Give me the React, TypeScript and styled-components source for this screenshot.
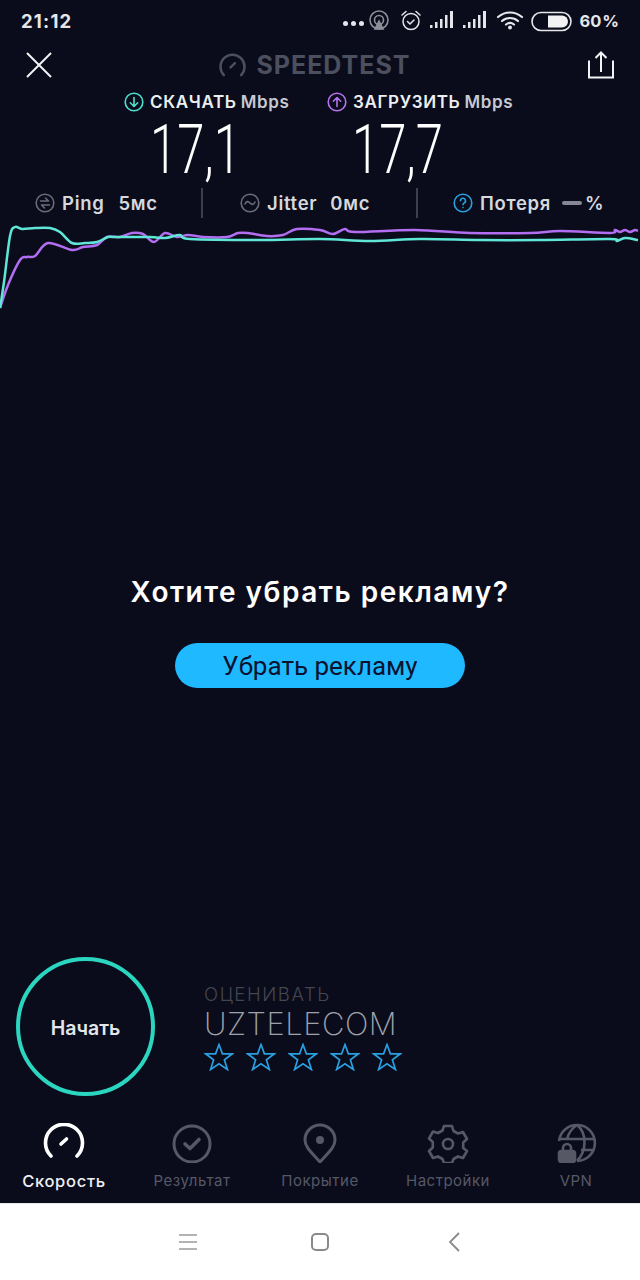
import React from 'react';
import styled, { createGlobalStyle } from 'styled-components';

const GlobalStyle = createGlobalStyle`
  html, body { margin: 0; padding: 0; background: #0a0c1b; }
  * { box-sizing: border-box; }
`;

const Screen = styled.div`
  width: 640px;
  height: 1280px;
  display: flex;
  flex-direction: column;
  background: #0a0c1b;
  font-family: Inter, "Noto Sans", sans-serif;
  overflow: hidden;
`;

const StatusBar = styled.div`
  height: 41px;
  padding: 0 21px 0 21px;
  display: flex;
  align-items: center;
  color: #e6e6ea;
`;

const Clock = styled.span`
  font-size: 18.5px;
  font-weight: 700;
  letter-spacing: 1.2px;
  margin-right: auto;
`;

const Battery = styled.span`
  font-size: 16.5px;
  font-weight: 700;
  margin-left: 7px;
  word-spacing: -3px;
`;

const StatusIcons = styled.svg`
  display: block;
`;

const Header = styled.div`
  height: 48px;
  padding: 0 26px;
  display: flex;
  align-items: center;
  justify-content: space-between;
`;

const Logo = styled.div`
  display: flex;
  align-items: center;
  gap: 10px;
  color: #4c4f5e;
  font-size: 25px;
  font-weight: 700;
  letter-spacing: 1px;
  margin-right: 10px;
`;

const SpeedRow = styled.div`
  display: flex;
  height: 26px;
  align-items: center;
  padding-left: 124px;
`;

const SpeedLabel = styled.div<{ $width: number }>`
  width: ${(p) => p.$width}px;
  display: flex;
  align-items: center;
  gap: 6px;
  font-size: 17px;
  font-weight: 600;
  letter-spacing: 0.65px;
  color: #eceef2;
  white-space: nowrap;
`;

const Unit = styled.span`
  color: #c6c9d2;
  margin-left: -2px;
`;

const Values = styled.div`
  display: flex;
  height: 66px;
  padding: 3px 0 0 150px;
`;

const Value = styled.div<{ $width: number }>`
  width: ${(p) => p.$width}px;
  font-family: Roboto, sans-serif;
  font-weight: 300;
  font-size: 69px;
  line-height: 63px;
  color: #fff;
  transform: scaleX(0.71);
  transform-origin: left center;
  white-space: nowrap;
`;

const Stats = styled.div`
  display: grid;
  grid-template-columns: 201px 215px 224px;
  height: 30px;
  margin-top: 7px;
`;

const Stat = styled.div<{ $pad: number; $divider?: boolean }>`
  display: flex;
  align-items: center;
  padding-left: ${(p) => p.$pad}px;
  font-size: 18.5px;
  font-weight: 600;
  letter-spacing: 0.7px;
  color: #d6d8de;
  white-space: nowrap;
  border-left: ${(p) => (p.$divider ? '2px solid #3c3f4c' : 'none')};
`;

const StatName = styled.span<{ $gap: number }>`
  margin: 0 ${(p) => p.$gap}px 0 7px;
`;

const Dash = styled.span`
  width: 20px;
  height: 4px;
  border-radius: 2px;
  background: #858894;
  margin: 0 3px 0 8px;
`;

const Chart = styled.svg`
  display: block;
  margin-top: 4px;
`;

const Promo = styled.div`
  flex: 1;
  display: flex;
  flex-direction: column;
  align-items: center;
  padding-top: 260px;
`;

const PromoTitle = styled.div`
  font-size: 28px;
  line-height: 36px;
  font-weight: 600;
  letter-spacing: 1.5px;
  color: #fff;
`;

const PromoButton = styled.button`
  width: 290px;
  height: 45px;
  margin-top: 33px;
  border: none;
  border-radius: 23px;
  background: #1fb9ff;
  color: #0a1230;
  font-family: Roboto, sans-serif;
  font-size: 26px;
  padding: 0;
`;

const Bottom = styled.div`
  display: flex;
  align-items: center;
  padding-left: 16px;
  height: 139px;
  margin-bottom: 24px;
`;

const StartCircle = styled.div`
  width: 139px;
  height: 139px;
  border: 4px solid #2bd6c0;
  border-radius: 50%;
  display: flex;
  align-items: center;
  justify-content: center;
  color: #e4e5ea;
  font-size: 19.5px;
  font-weight: 600;
  padding-top: 3px;
`;

const Rate = styled.div`
  margin-left: 49px;
  display: flex;
  flex-direction: column;
`;

const RateCaption = styled.div`
  font-size: 18.5px;
  line-height: 22px;
  font-weight: 300;
  letter-spacing: 1.6px;
  margin-top: 1px;
  color: #44464f;
`;

const Isp = styled.div`
  font-size: 31px;
  line-height: 36px;
  font-weight: 200;
  color: #a0a2ab;
  letter-spacing: 0.5px;
  margin-top: 1px;
`;

const Stars = styled.div`
  display: flex;
  gap: 12px;
  margin-top: 1px;
`;

const Tabs = styled.div`
  display: grid;
  grid-template-columns: repeat(5, 1fr);
  padding-top: 3px;
  height: 83px;
`;

const Tab = styled.div<{ $active?: boolean }>`
  display: flex;
  flex-direction: column;
  align-items: center;
  gap: 8px;
  font-size: ${(p) => (p.$active ? 16.5 : 15)}px;
  line-height: 20px;
  font-weight: ${(p) => (p.$active ? 500 : 400)};
  letter-spacing: ${(p) => (p.$active ? 0.7 : 0.5)}px;
  color: ${(p) => (p.$active ? '#eef0f4' : '#565866')};
`;

const NavBar = styled.div`
  flex: none;
  height: 77px;
  background: #fff;
  border-top: 1px solid #e8e8ec;
  display: flex;
  align-items: center;
  gap: 114px;
  padding: 0 0 1px 179px;
`;

const BackIcon = styled.svg`
  margin-left: 5px;
`;

const pointsToPath = (pts: number[][]) => {
  let d = `M${pts[0][0]} ${pts[0][1]}`;
  for (let i = 0; i < pts.length - 1; i++) {
    const p0 = pts[Math.max(i - 1, 0)];
    const p1 = pts[i];
    const p2 = pts[i + 1];
    const p3 = pts[Math.min(i + 2, pts.length - 1)];
    const c1x = p1[0] + (p2[0] - p0[0]) / 6;
    const c1y = p1[1] + (p2[1] - p0[1]) / 6;
    const c2x = p2[0] - (p3[0] - p1[0]) / 6;
    const c2y = p2[1] - (p3[1] - p1[1]) / 6;
    d += ` C${c1x.toFixed(1)} ${c1y.toFixed(1)} ${c2x.toFixed(1)} ${c2y.toFixed(1)} ${p2[0]} ${p2[1]}`;
  }
  return d;
};

// y values are relative to the top of the chart (page y 222)
const downloadLine = [
  [0, 86], [4, 60], [10, 14], [15, 5], [22, 7], [35, 6], [50, 6], [60, 10], [72, 21], [85, 21], [97, 20],
  [108, 15], [115, 15], [150, 15], [165, 16], [180, 13], [190, 17], [260, 18], [320, 17], [370, 19], [420, 17],
  [480, 18], [540, 18], [610, 17], [617, 19], [625, 16], [638, 18],
];
const uploadLine = [
  [0, 86], [8, 63], [20, 38], [27, 35], [35, 34], [48, 21], [72, 28], [83, 25], [97, 23], [107, 15], [120, 15],
  [132, 11], [143, 12], [154, 20], [165, 11], [177, 15], [188, 13], [203, 15], [227, 15], [238, 11], [248, 11],
  [267, 14], [283, 13], [297, 7], [320, 8], [333, 12], [345, 7], [355, 10], [415, 8], [470, 11], [530, 11],
  [560, 9], [610, 11], [615, 8], [620, 10], [625, 8], [630, 10], [635, 8], [638, 9],
];

const Star = () => (
  <svg width="30" height="28" viewBox="0 0 30 28" fill="none" stroke="#2a9fe0" strokeWidth="1.7" strokeLinejoin="miter">
    <path d="M15 1.5l3.4 9.3h10l-8 6 3 9.7-8.400-5.800-8.400 5.800 3-9.700-8-6h10z" />
  </svg>
);

const CircleIcon = ({ color, children }: { color: string; children: React.ReactNode }) => (
  <svg width="20" height="20" viewBox="0 0 20 20" fill="none" stroke={color} strokeWidth="1.6" strokeLinecap="round" strokeLinejoin="round">
    <circle cx="10" cy="10" r="8.800" />
    {children}
  </svg>
);

const tabColor = '#565866';

const StatusGlyphs = () => (
  <StatusIcons width="229" height="24" viewBox="0 0 229 24" fill="none">
    <g fill="#e6e6ea">
      <circle cx="2.500" cy="14.500" r="2.500" />
      <circle cx="10.500" cy="14.500" r="2.500" />
      <circle cx="18.500" cy="14.500" r="2.500" />
    </g>
    <g stroke="#8d8f98" strokeWidth="1.600">
      <circle cx="36" cy="11" r="9" />
      <circle cx="36" cy="11" r="4.500" />
      <path d="M36 12l-4 8h8z" fill="#8d8f98" />
    </g>
    <g stroke="#e6e6ea" strokeWidth="1.500" strokeLinecap="round" strokeLinejoin="round">
      <circle cx="68" cy="12.500" r="8" />
      <path d="M64.500 12.500l2.500 2.500 4-4M59 6l4-3.500M77 6l-4-3.500" />
    </g>
    <g fill="#e6e6ea">
      <rect x="87" y="16" width="2.500" height="3" />
      <rect x="92" y="13" width="2.500" height="6" />
      <rect x="97" y="10" width="2.500" height="9" />
      <rect x="102" y="6" width="2.500" height="13" />
      <rect x="107" y="2" width="3" height="17" />
      <rect x="120" y="16" width="2.500" height="3" />
      <rect x="125" y="13" width="2.500" height="6" />
      <rect x="130" y="10" width="2.500" height="9" />
      <rect x="135" y="6" width="2.500" height="13" />
      <rect x="140" y="2" width="3" height="17" />
    </g>
    <g stroke="#e6e6ea" strokeWidth="2.200" strokeLinecap="round" fill="none">
      <path d="M155 8c7-6 17-6 24 0M159 12c4.500-4 11.500-4 16 0M163 15.500c2.500-2 5.500-2 8 0" />
    </g>
    <circle cx="167" cy="18.500" r="2" fill="#e6e6ea" />
    <rect x="189" y="3.500" width="39" height="18" rx="9" stroke="#e6e6ea" strokeWidth="1.600" />
    <path d="M205 6.500h14a6 6 0 0 1 0 12h-14z" fill="#f2f2f4" />
  </StatusIcons>
);

export default function App() {
  return (
    <Screen>
      <GlobalStyle />
      <StatusBar>
        <Clock>21:12</Clock>
        <StatusGlyphs />
        <Battery>60 %</Battery>
      </StatusBar>

      <Header>
        <svg width="26" height="26" viewBox="0 0 26 26" stroke="#f2f3f5" strokeWidth="2" fill="none">
          <path d="M1 1l24 24M25 1L1 25" />
        </svg>
        <Logo>
          <svg width="27" height="25" viewBox="0 0 28 26" fill="none" stroke="#4c4f5e" strokeWidth="2.600" strokeLinecap="round">
            <path d="M5 23A12.500 12.500 0 1 1 23 23" />
            <path d="M12 15l4.500-4.500" />
          </svg>
          SPEEDTEST
        </Logo>
        <svg width="26" height="28" viewBox="0 0 26 28" fill="none" stroke="#f2f3f5" strokeWidth="2">
          <path d="M1 9.500V26.500H25V9.500M13 21V2M7.500 7L13 1.500 18.500 7" />
        </svg>
      </Header>

      <SpeedRow>
        <SpeedLabel $width={203}>
          <CircleIcon color="#4fe0cf">
            <path d="M10 5.500v9M6.300 10.800L10 14.500l3.700-3.700" />
          </CircleIcon>
          СКАЧАТЬ <Unit>Mbps</Unit>
        </SpeedLabel>
        <SpeedLabel $width={200}>
          <CircleIcon color="#b672ee">
            <path d="M10 14.500v-9M6.300 9.200L10 5.500l3.700 3.700" />
          </CircleIcon>
          ЗАГРУЗИТЬ <Unit>Mbps</Unit>
        </SpeedLabel>
      </SpeedRow>

      <Values>
        <Value $width={202}>17,1</Value>
        <Value $width={150}>17,7</Value>
      </Values>

      <Stats>
        <Stat $pad={35}>
          <CircleIcon color="#6a6c78">
            <path d="M5.500 8h8l-3-3M14.500 12h-8l3 3" />
          </CircleIcon>
          <StatName $gap={14}>Ping</StatName>
          5мс
        </Stat>
        <Stat $pad={37} $divider>
          <CircleIcon color="#6a6c78">
            <path d="M5 11c1.500-3 3-3 5-1s3.500 2 5-1" />
          </CircleIcon>
          <StatName $gap={13}>Jitter</StatName>
          0мс
        </Stat>
        <Stat $pad={35} $divider>
          <CircleIcon color="#2a9fe0">
            <path d="M7.500 7.800a2.500 2.500 0 1 1 3.500 2.300c-.7.400-1 .8-1 1.700M10 14.500v.1" />
          </CircleIcon>
          <StatName $gap={3}>Потеря</StatName>
          <Dash />
          %
        </Stat>
      </Stats>

      <Chart width="640" height="92" viewBox="0 0 640 92" fill="none" strokeWidth="2.500" strokeLinejoin="round">
        <path d={pointsToPath(uploadLine)} stroke="#b26df0" />
        <path d={pointsToPath(downloadLine)} stroke="#5fe6d6" />
      </Chart>

      <Promo>
        <PromoTitle>Хотите убрать рекламу?</PromoTitle>
        <PromoButton>Убрать рекламу</PromoButton>
      </Promo>

      <Bottom>
        <StartCircle>Начать</StartCircle>
        <Rate>
          <RateCaption>ОЦЕНИВАТЬ</RateCaption>
          <Isp>UZTELECOM</Isp>
          <Stars>
            {[0, 1, 2, 3, 4].map((i) => (
              <Star key={i} />
            ))}
          </Stars>
        </Rate>
      </Bottom>

      <Tabs>
        <Tab $active>
          <svg width="42" height="40" viewBox="0 0 42 40" fill="none" stroke="#fff" strokeWidth="3.600" strokeLinecap="round">
            <path d="M8 33A18.500 18.500 0 1 1 34 33" />
            <path d="M18 21l5.500-5" />
          </svg>
          Скорость
        </Tab>
        <Tab>
          <svg width="42" height="40" viewBox="0 0 42 40" fill="none" stroke={tabColor} strokeWidth="3" strokeLinecap="round" strokeLinejoin="round">
            <circle cx="21" cy="21" r="18" />
            <path d="M14 21l5 4.500 9-9" strokeWidth="3.600" />
          </svg>
          Результат
        </Tab>
        <Tab>
          <svg width="42" height="40" viewBox="0 0 42 40" fill="none" stroke={tabColor} strokeWidth="3" strokeLinejoin="round">
            <path d="M21 39C12 29 6 24 6 17a15 15 0 0 1 30 0c0 7-6 12-15 22z" />
            <circle cx="21" cy="17" r="2.500" fill={tabColor} />
          </svg>
          Покрытие
        </Tab>
        <Tab>
          <svg width="42" height="40" viewBox="0 0 42 40" fill="none" stroke={tabColor} strokeWidth="2.600" strokeLinejoin="round">
            <path d="M17 3h8l1.500 5 4.500 2.500 5-1.500 4 7-3.800 3.500v5.500L40 28l-4 7-5-1.500-4.500 2.500-1.500 4h-8l-1.500-4-4.500-2.500-5 1.500-4-7 3.800-3.500V19L2 15.500l4-7 5 1.500L15.500 7.500z" />
            <circle cx="21" cy="21" r="5" />
          </svg>
          Настройки
        </Tab>
        <Tab>
          <svg width="42" height="40" viewBox="0 0 42 40" fill="none" stroke={tabColor} strokeWidth="2.600">
            <path d="M4 18A18 18 0 1 1 22 38M22 2c10 8 10 26 0 36M22 2c-6 4-9 10-10 14M4 16h35M26 27h12" />
            <path d="M8 28v-3a4 4 0 0 1 8 0v3" />
            <rect x="4" y="28" width="16" height="11" rx="2.500" fill={tabColor} />
          </svg>
          VPN
        </Tab>
      </Tabs>

      <NavBar>
        <svg width="18" height="18" viewBox="0 0 18 18" stroke="#9a9a9a" strokeWidth="1.600">
          <path d="M0 2h18M0 9h18M0 16h18" />
        </svg>
        <svg width="18" height="18" viewBox="0 0 18 18" fill="none" stroke="#8a8a8a" strokeWidth="2">
          <rect x="1" y="1" width="16" height="16" rx="4" />
        </svg>
        <BackIcon width="12" height="20" viewBox="0 0 12 20" fill="none" stroke="#8a8a8a" strokeWidth="1.800">
          <path d="M11 1L2 10l9 9" />
        </BackIcon>
      </NavBar>
    </Screen>
  );
}
